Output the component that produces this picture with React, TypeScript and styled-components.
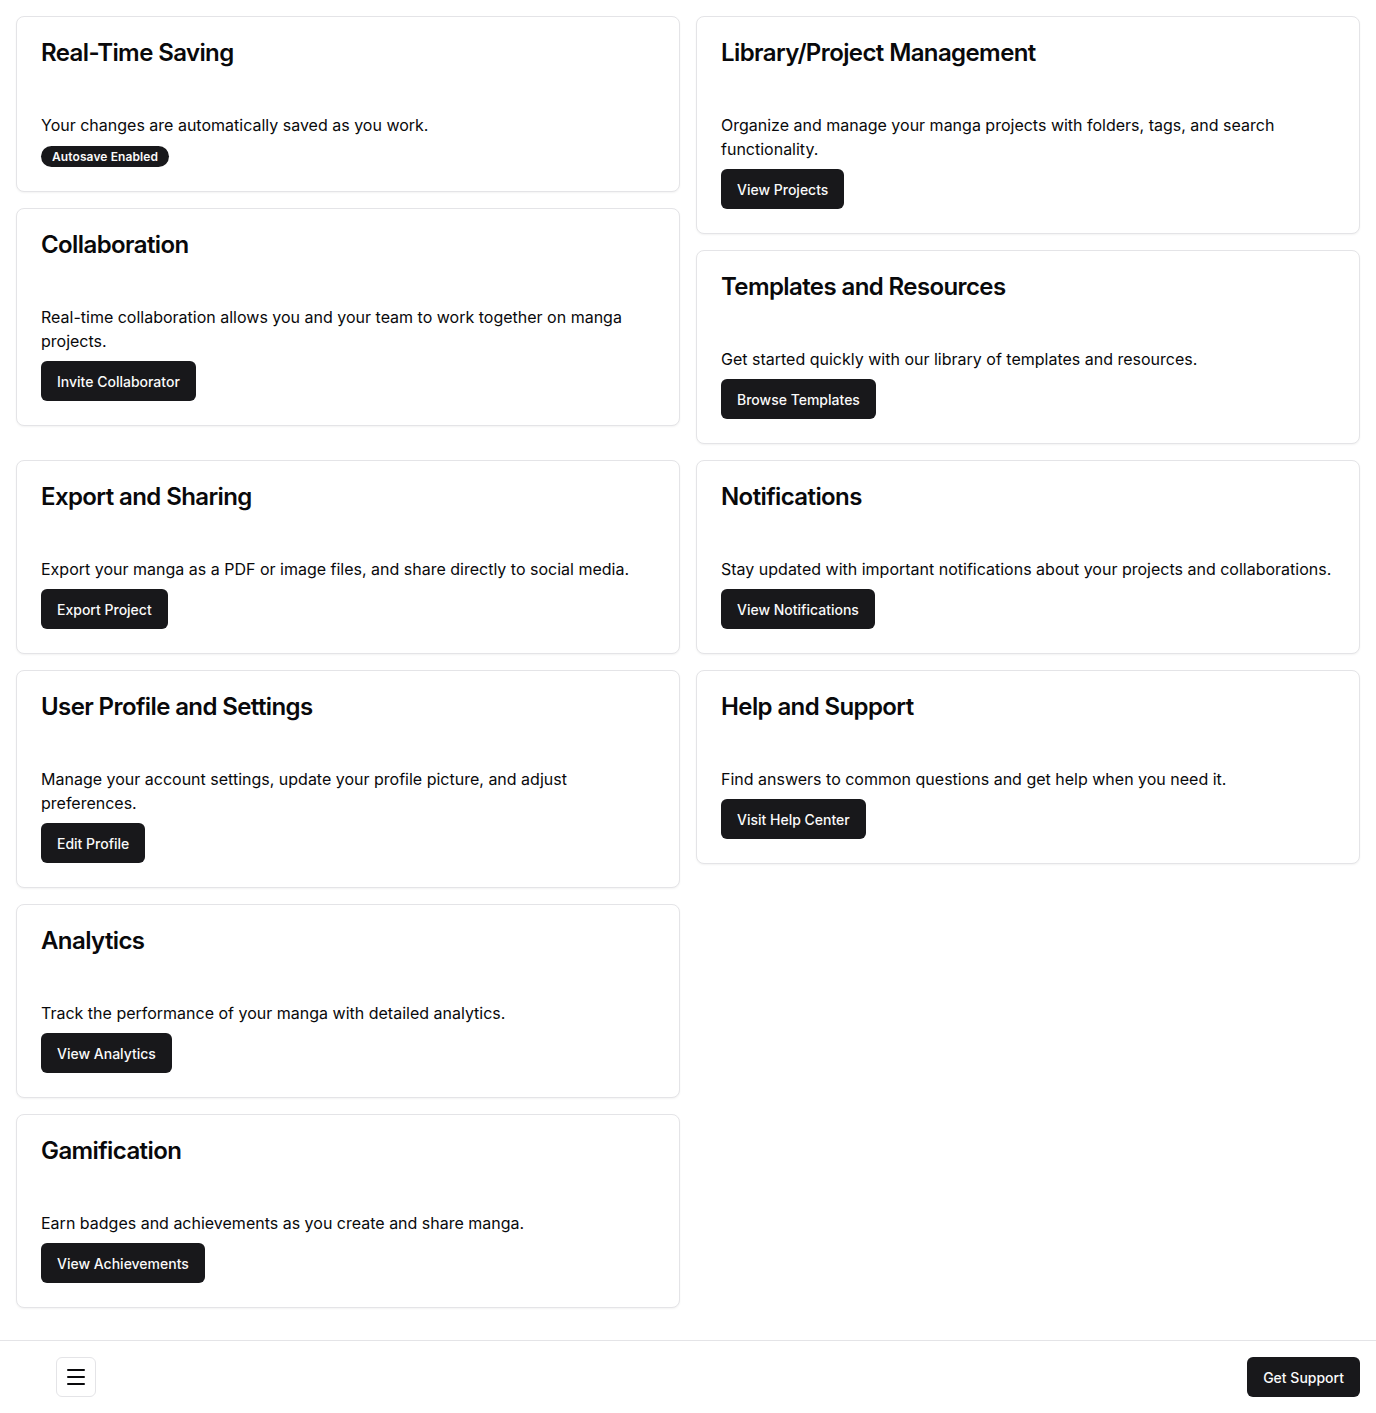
import React from 'react';
import styled, { createGlobalStyle } from 'styled-components';
import { Menu } from 'lucide-react';

const GlobalStyle = createGlobalStyle`
  * { box-sizing: border-box; }
  body {
    margin: 0;
    background: #ffffff;
    color: #09090b;
    font-family: Inter, "Noto Sans", "Liberation Sans", sans-serif;
    -webkit-font-smoothing: antialiased;
  }
`;

interface FeatureCardProps {
  title: string;
  text: string;
  action?: string;
  badge?: string;
}

const FeatureCard: React.FC<FeatureCardProps> = ({ title, text, action, badge }) => {
  return (
    <Card>
      <Header>
        <Title>{title}</Title>
      </Header>
      <Content>
        <Text>{text}</Text>
        {badge && <Badge>{badge}</Badge>}
        {action && <Button>{action}</Button>}
      </Content>
    </Card>
  );
};

export default function App() {
  return (
    <>
      <GlobalStyle />
      <Main>
        <Grid>
          <Stack>
            <FeatureCard
              title="Real-Time Saving"
              text="Your changes are automatically saved as you work."
              badge="Autosave Enabled"
            />
            <FeatureCard
              title="Collaboration"
              text="Real-time collaboration allows you and your team to work together on manga projects."
              action="Invite Collaborator"
            />
          </Stack>
          <Stack>
            <FeatureCard
              title="Library/Project Management"
              text="Organize and manage your manga projects with folders, tags, and search functionality."
              action="View Projects"
            />
            <FeatureCard
              title="Templates and Resources"
              text="Get started quickly with our library of templates and resources."
              action="Browse Templates"
            />
          </Stack>
          <FeatureCard
            title="Export and Sharing"
            text="Export your manga as a PDF or image files, and share directly to social media."
            action="Export Project"
          />
          <FeatureCard
            title="Notifications"
            text="Stay updated with important notifications about your projects and collaborations."
            action="View Notifications"
          />
          <FeatureCard
            title="User Profile and Settings"
            text="Manage your account settings, update your profile picture, and adjust preferences."
            action="Edit Profile"
          />
          <FeatureCard
            title="Help and Support"
            text="Find answers to common questions and get help when you need it."
            action="Visit Help Center"
          />
          <Stack>
            <FeatureCard
              title="Analytics"
              text="Track the performance of your manga with detailed analytics."
              action="View Analytics"
            />
            <FeatureCard
              title="Gamification"
              text="Earn badges and achievements as you create and share manga."
              action="View Achievements"
            />
          </Stack>
        </Grid>
      </Main>
      <Footer>
        <IconButton aria-label="Menu">
          <Menu size={24} strokeWidth={2} />
        </IconButton>
        <Button>Get Support</Button>
      </Footer>
    </>
  );
}

const Main = styled.main`
  padding: 16px 16px 32px;
`;

const Grid = styled.div`
  display: grid;
  grid-template-columns: 1fr 1fr;
  gap: 16px;
  align-items: start;
`;

const Stack = styled.div`
  display: flex;
  flex-direction: column;
  gap: 16px;
`;

const Card = styled.div`
  border: 1px solid #e4e4e7;
  border-radius: 8px;
  background: #ffffff;
  box-shadow: 0 1px 2px rgba(0, 0, 0, 0.05);
`;

const Header = styled.div`
  padding: 24px 24px 0;
`;

const Title = styled.h3`
  margin: 0;
  font-size: 24px;
  line-height: 24px;
  font-weight: 600;
  letter-spacing: -0.6px;
`;

const Content = styled.div`
  padding: 48px 24px 24px;
  display: flex;
  flex-direction: column;
  align-items: flex-start;
`;

const Text = styled.p`
  margin: 0 0 8px;
  font-size: 16px;
  line-height: 24px;
`;

const Badge = styled.span`
  display: inline-flex;
  align-items: center;
  height: 21px;
  padding: 0 11px;
  border-radius: 999px;
  background: #18181b;
  color: #fafafa;
  font-size: 12px;
  font-weight: 600;
  letter-spacing: 0.1px;
  margin-top: 1px;
`;

const Button = styled.button`
  display: inline-flex;
  align-items: center;
  justify-content: center;
  height: 40px;
  padding: 0 16px;
  border: none;
  border-radius: 6px;
  background: #18181b;
  color: #fafafa;
  font-family: inherit;
  font-size: 14px;
  font-weight: 500;
  cursor: pointer;
`;

const Footer = styled.footer`
  display: flex;
  align-items: center;
  justify-content: space-between;
  border-top: 1px solid #e4e4e7;
  padding: 16px 16px 16px 56px;
`;

const IconButton = styled.button`
  display: inline-flex;
  align-items: center;
  justify-content: center;
  width: 40px;
  height: 40px;
  border: 1px solid #e4e4e7;
  border-radius: 6px;
  background: #ffffff;
  color: #09090b;
  padding: 0;
  cursor: pointer;
`;
